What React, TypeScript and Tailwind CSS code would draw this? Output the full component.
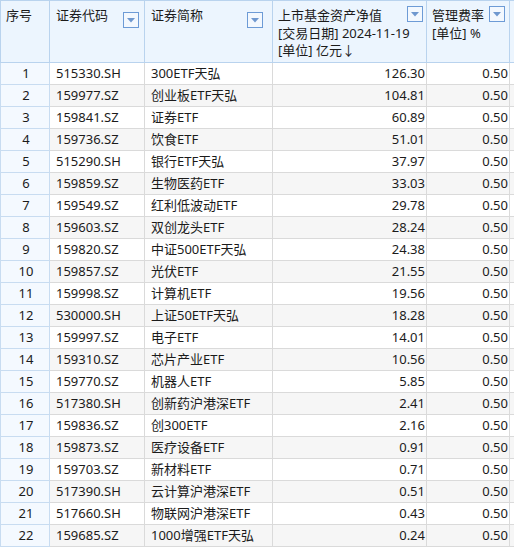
import React from "react";

const rows: [string, string, string, string][] = [
  ["1", "515330.SH", "300ETF天弘", "126.30"],
  ["2", "159977.SZ", "创业板ETF天弘", "104.81"],
  ["3", "159841.SZ", "证券ETF", "60.89"],
  ["4", "159736.SZ", "饮食ETF", "51.01"],
  ["5", "515290.SH", "银行ETF天弘", "37.97"],
  ["6", "159859.SZ", "生物医药ETF", "33.03"],
  ["7", "159549.SZ", "红利低波动ETF", "29.78"],
  ["8", "159603.SZ", "双创龙头ETF", "28.24"],
  ["9", "159820.SZ", "中证500ETF天弘", "24.38"],
  ["10", "159857.SZ", "光伏ETF", "21.55"],
  ["11", "159998.SZ", "计算机ETF", "19.56"],
  ["12", "530000.SH", "上证50ETF天弘", "18.28"],
  ["13", "159997.SZ", "电子ETF", "14.01"],
  ["14", "159310.SZ", "芯片产业ETF", "10.56"],
  ["15", "159770.SZ", "机器人ETF", "5.85"],
  ["16", "517380.SH", "创新药沪港深ETF", "2.41"],
  ["17", "159836.SZ", "创300ETF", "2.16"],
  ["18", "159873.SZ", "医疗设备ETF", "0.91"],
  ["19", "159703.SZ", "新材料ETF", "0.71"],
  ["20", "517390.SH", "云计算沪港深ETF", "0.51"],
  ["21", "517660.SH", "物联网沪港深ETF", "0.43"],
  ["22", "159685.SZ", "1000增强ETF天弘", "0.24"],
];

function Drop() {
  return (
    <div className="mt-[5px] flex h-[16px] w-[16px] shrink-0 items-center justify-center border border-[#6d9bd6] bg-[#f3f8fe]">
      <svg width="8" height="5" viewBox="0 0 8 5">
        <path d="M0 0 L8 0 L4 4.5 Z" fill="#6f98cf" />
      </svg>
    </div>
  );
}

export default function App() {
  return (
    <div
      className="w-[514px] h-[547px] overflow-hidden bg-white text-[13px] text-[#1b1b1b]"
      style={{ fontFamily: '"Noto Sans", "Noto Sans CJK SC", sans-serif' }}
    >
      {/* header */}
      <div className="flex h-[63px] border-t border-b border-l border-[#b9d3ee] bg-[#ecf5fe] leading-[17.5px] whitespace-nowrap">
        <div className="w-[49px] shrink-0 border-r border-[#b9d3ee] pl-[5px] pt-[6px]">序号</div>
        <div className="flex w-[95px] shrink-0 justify-between border-r border-[#b9d3ee] pl-[6px] pr-[5px] pt-[6px]">
          <span>证券代码</span>
          <Drop />
        </div>
        <div className="flex w-[128px] shrink-0 justify-between border-r border-[#b9d3ee] pl-[6px] pr-[9px] pt-[6px]">
          <span>证券简称</span>
          <Drop />
        </div>
        <div className="relative w-[154px] shrink-0 border-r border-[#b9d3ee] pl-[5px] pt-[6px]">
          <div>上市基金资产净值</div>
          <div>[交易日期] 2024-11-19</div>
          <div>[单位] 亿元↓</div>
          <div className="absolute right-[3px] top-0">
            <Drop />
          </div>
        </div>
        <div className="relative w-[83px] shrink-0 border-r border-[#b9d3ee] pl-[5px] pt-[6px]">
          <div>管理费率</div>
          <div>[单位] %</div>
          <div className="absolute right-[4px] top-0">
            <Drop />
          </div>
        </div>
        <div className="flex-1" />
      </div>
      {rows.map((r, i) => (
        <div
          key={r[0]}
          className={`flex h-[22px] items-center leading-[21px] ${i % 2 === 1 ? "bg-[#f6f6f6]" : "bg-white"}`}
        >
          <div className="h-full w-[50px] shrink-0 border-b border-r border-l border-[#c8dcf1] bg-[#f4f9ff] pl-[2px] text-center">
            {r[0]}
          </div>
          <div className="h-full w-[95px] shrink-0 border-b border-r border-[#dadada] pl-[6px]">{r[1]}</div>
          <div className="h-full w-[128px] shrink-0 border-b border-r border-[#dadada] pl-[6px] whitespace-nowrap overflow-hidden">
            {r[2]}
          </div>
          <div className="h-full w-[154px] shrink-0 border-b border-r border-[#dadada] pr-[1px] text-right">{r[3]}</div>
          <div className="h-full w-[83px] shrink-0 border-b border-r border-[#dadada] pr-[1px] text-right">0.50</div>
          <div className="h-full flex-1 border-b border-[#dadada]" />
        </div>
      ))}
    </div>
  );
}
